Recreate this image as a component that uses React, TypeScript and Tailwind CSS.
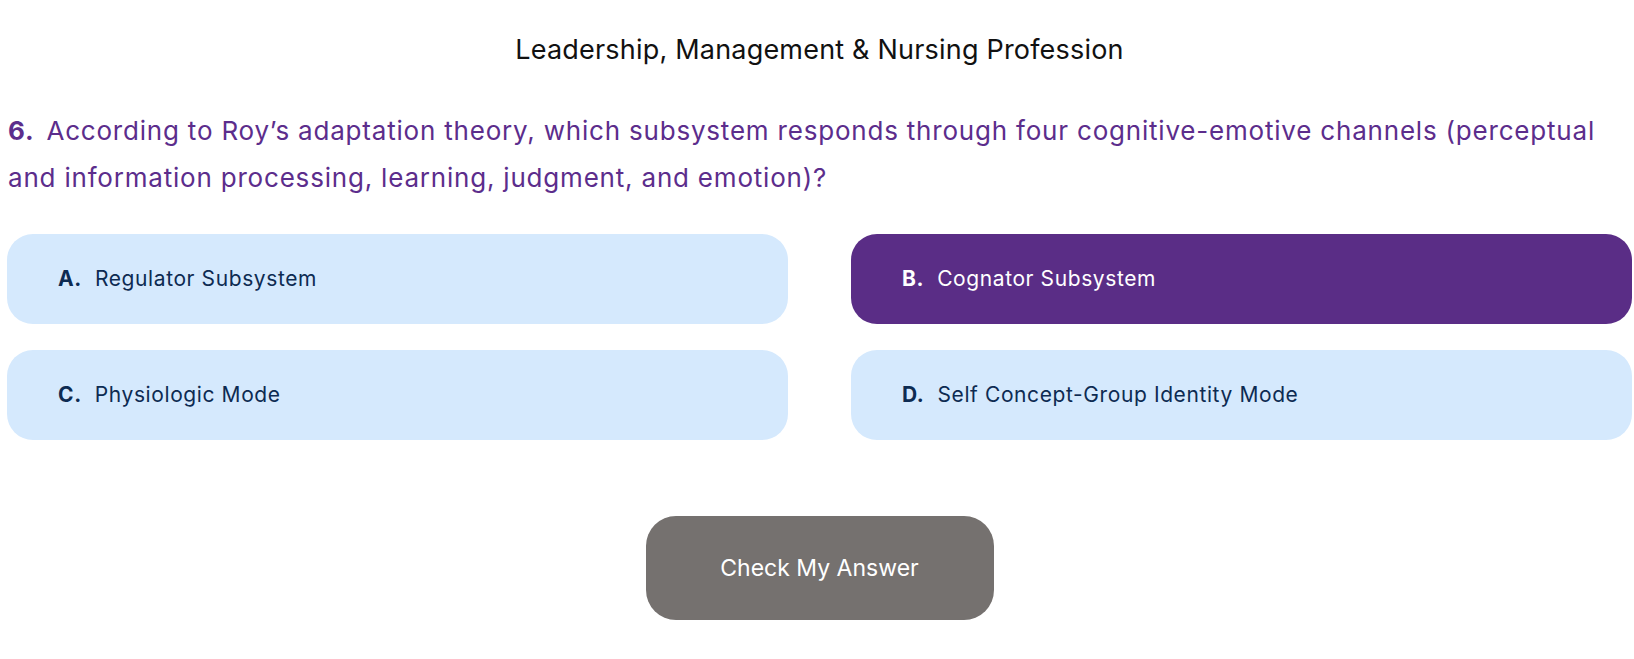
import { useState } from 'react';

const options = [
  { key: 'A', text: 'Regulator Subsystem' },
  { key: 'B', text: 'Cognator Subsystem' },
  { key: 'C', text: 'Physiologic Mode' },
  { key: 'D', text: 'Self Concept-Group Identity Mode' },
];

export default function App() {
  const [selected, setSelected] = useState('B');

  return (
    <div className="min-h-screen bg-white pl-[7px] pr-[2px] pt-[30px] font-['Inter',sans-serif]">
      <h2 className="text-center text-[27px] leading-[40px] text-[#111111] tracking-[0.2px]">
        Leadership, Management &amp; Nursing Profession
      </h2>

      <p className="mt-[37px] pl-[1px] text-[26px] leading-[47px] text-[#5c2d8c] tracking-[0.8px]">
        <span className="mr-[12px] font-bold">6.</span>
        According to Roy’s adaptation theory, which subsystem responds through four cognitive-emotive channels
        (perceptual and information processing, learning, judgment, and emotion)?
      </p>

      <div className="mt-[33px] grid grid-cols-2 gap-x-[63px] gap-y-[26px]">
        {options.map((o) => {
          const active = selected === o.key;
          return (
            <button
              key={o.key}
              onClick={() => setSelected(o.key)}
              className={
                active
                  ? 'flex h-[90px] items-center rounded-[26px] bg-[#5a2d86] pl-[51px] text-left text-[21px] tracking-[0.6px] text-white'
                  : 'flex h-[90px] items-center rounded-[26px] bg-[#d5e9fd] pl-[51px] text-left text-[21px] tracking-[0.6px] text-[#0d2b52]'
              }
            >
              <span className="font-bold">{o.key}.</span>
              <span className="ml-[13px]">{o.text}</span>
            </button>
          );
        })}
      </div>

      <div className="mt-[76px] flex justify-center">
        <button className="h-[104px] w-[348px] rounded-[30px] bg-[#75716f] text-[23px] text-white">
          Check My Answer
        </button>
      </div>
    </div>
  );
}
